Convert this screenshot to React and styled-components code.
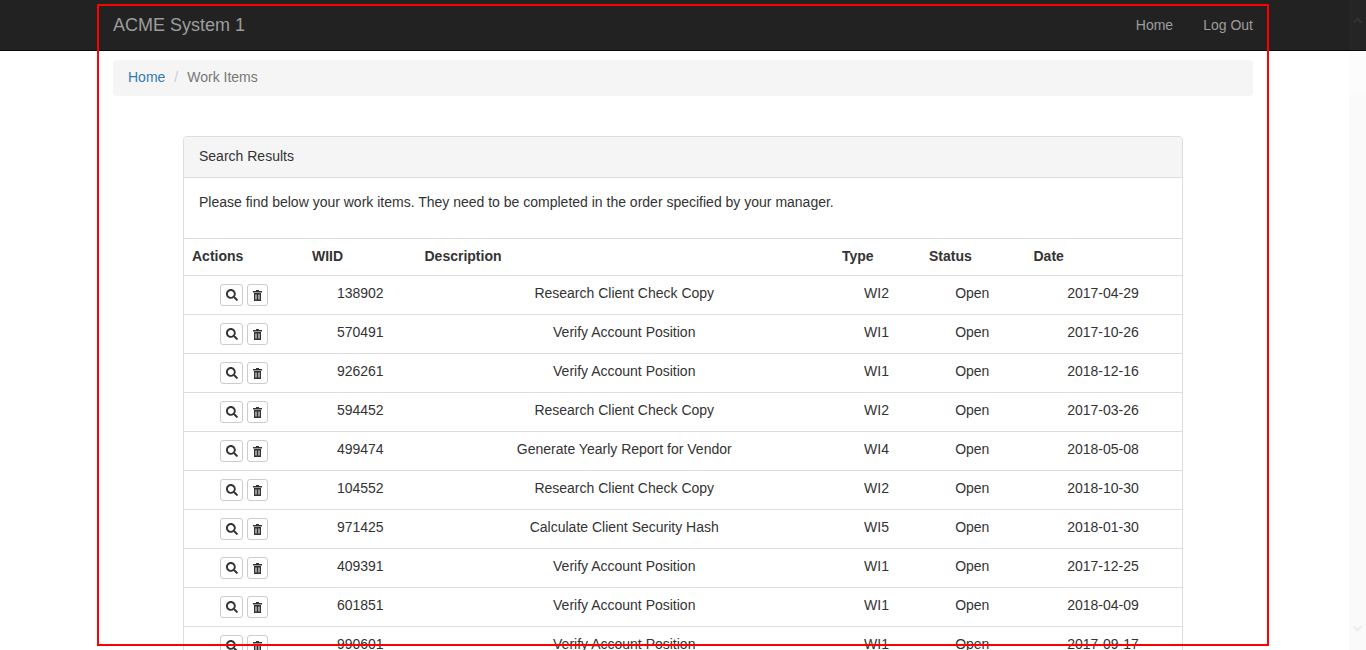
import React from 'react';
import styled, { createGlobalStyle } from 'styled-components';
import { FaSearch, FaChevronUp, FaChevronDown } from 'react-icons/fa';

const workItems = [
  { id: '138902', description: 'Research Client Check Copy', type: 'WI2', date: '2017-04-29' },
  { id: '570491', description: 'Verify Account Position', type: 'WI1', date: '2017-10-26' },
  { id: '926261', description: 'Verify Account Position', type: 'WI1', date: '2018-12-16' },
  { id: '594452', description: 'Research Client Check Copy', type: 'WI2', date: '2017-03-26' },
  { id: '499474', description: 'Generate Yearly Report for Vendor', type: 'WI4', date: '2018-05-08' },
  { id: '104552', description: 'Research Client Check Copy', type: 'WI2', date: '2018-10-30' },
  { id: '971425', description: 'Calculate Client Security Hash', type: 'WI5', date: '2018-01-30' },
  { id: '409391', description: 'Verify Account Position', type: 'WI1', date: '2017-12-25' },
  { id: '601851', description: 'Verify Account Position', type: 'WI1', date: '2018-04-09' },
  { id: '990601', description: 'Verify Account Position', type: 'WI1', date: '2017-09-17' },
];

const columns = [
  { label: 'Actions', width: 120 },
  { label: 'WIID', width: 112.5 },
  { label: 'Description', width: 417.5 },
  { label: 'Type', width: 87 },
  { label: 'Status', width: 104.5 },
  { label: 'Date', width: 157 },
];

const TrashIcon = () => (
  <svg width="9" height="11" viewBox="0 0 9 11" aria-hidden="true">
    <path
      fill="currentColor"
      fillRule="evenodd"
      d="M3 0h3v1h3v1.5H0V1h3zM1 3h7v8H1zM2.5 4.5v5h1v-5zm3 0v5h1v-5z"
    />
  </svg>
);

const App = () => (
  <Page>
    <GlobalStyle />
    <Navbar>
      <NavContainer>
        <Brand>ACME System 1</Brand>
        <NavLinks>
          <NavLink>Home</NavLink>
          <NavLink>Log Out</NavLink>
        </NavLinks>
      </NavContainer>
    </Navbar>
    <Container>
      <Breadcrumb>
        <CrumbLink>Home</CrumbLink>
        <CrumbDivider>/</CrumbDivider>
        <CrumbCurrent>Work Items</CrumbCurrent>
      </Breadcrumb>
      <Panel>
        <PanelHeading>Search Results</PanelHeading>
        <PanelBody>
          Please find below your work items. They need to be completed in the order specified by your manager.
        </PanelBody>
        <Table>
          <colgroup>
            {columns.map((column) => <col key={column.label} width={column.width} />)}
          </colgroup>
          <thead>
            <tr>
              {columns.map((column) => <HeadCell key={column.label}>{column.label}</HeadCell>)}
            </tr>
          </thead>
          <tbody>
            {workItems.map((item) => (
              <tr key={item.id}>
                <Cell>
                  <Actions>
                    <IconButton type="button" aria-label="View"><FaSearch size={12} /></IconButton>
                    <IconButton type="button" aria-label="Delete" $narrow><TrashIcon /></IconButton>
                  </Actions>
                </Cell>
                <Cell>{item.id}</Cell>
                <Cell>{item.description}</Cell>
                <Cell>{item.type}</Cell>
                <Cell>Open</Cell>
                <Cell>{item.date}</Cell>
              </tr>
            ))}
          </tbody>
        </Table>
      </Panel>
    </Container>
    <Scrollbar>
      <ScrollThumb>
        <FaChevronUp size={11} />
      </ScrollThumb>
      <ScrollTrack>
        <FaChevronDown size={11} />
      </ScrollTrack>
    </Scrollbar>
    <RedFrame />
  </Page>
);

const GlobalStyle = createGlobalStyle`
  html, body {
    margin: 0;
    height: 650px;
    overflow: hidden;
    background: #fff;
  }
  body {
    font-family: "Liberation Sans", Arial, sans-serif;
    font-size: 14px;
    line-height: 20px;
    color: #333;
  }
`;

const Page = styled.div`
  position: relative;
  width: 1366px;
  height: 650px;
  overflow: hidden;
`;

const Navbar = styled.nav`
  height: 50px;
  background-color: #222;
  border-bottom: 1px solid #080808;
`;

const NavContainer = styled.div`
  width: 1140px;
  height: 50px;
  margin: 0 auto;
  display: flex;
  align-items: center;
  justify-content: space-between;
`;

const Brand = styled.a`
  font-size: 18px;
  color: #9d9d9d;
`;

const NavLinks = styled.div`
  display: flex;
  gap: 30px;
`;

const NavLink = styled.a`
  color: #9d9d9d;
`;

const Container = styled.div`
  width: 1140px;
  margin: 0 auto;
  padding-top: 9px;
`;

const Breadcrumb = styled.ol`
  display: flex;
  margin: 0 0 40px;
  padding: 7px 15px 9px;
  background-color: #f5f5f5;
  border-radius: 4px;
  list-style: none;
`;

const CrumbLink = styled.li`
  color: #337ab7;
`;

const CrumbDivider = styled.li`
  padding: 0 9px;
  color: #ccc;
`;

const CrumbCurrent = styled.li`
  color: #777;
`;

const Panel = styled.section`
  width: 998px;
  margin: 0 auto;
  background: #fff;
  border: 1px solid #ddd;
  border-radius: 4px;
`;

const PanelHeading = styled.div`
  padding: 9px 15px 11px;
  background-color: #f5f5f5;
  border-bottom: 1px solid #ddd;
  border-radius: 3px 3px 0 0;
`;

const PanelBody = styled.p`
  margin: 0;
  padding: 14px 15px 26px;
`;

const Table = styled.table`
  width: 998px;
  table-layout: fixed;
  border-collapse: collapse;
`;

const HeadCell = styled.th`
  padding: 7px 8px 9px;
  text-align: left;
  font-weight: bold;
  border-top: 1px solid #ddd;
  border-bottom: 1px solid #ddd;
`;

const Cell = styled.td`
  padding: 7px 8px 9px;
  text-align: center;
  vertical-align: top;
  border-top: 1px solid #ddd;

  &:nth-child(n + 3) {
    padding-right: 10px;
  }
`;

const Actions = styled.div`
  display: flex;
  justify-content: center;
  gap: 4px;
  margin: 1px 0 -1px;
`;

const IconButton = styled.button`
  display: flex;
  align-items: center;
  justify-content: center;
  width: ${(props) => (props.$narrow ? 21 : 23)}px;
  height: 22px;
  padding: 0;
  background: #fff;
  color: #333;
  border: 1px solid #ccc;
  border-radius: 3px;
`;

const Scrollbar = styled.div`
  position: absolute;
  top: 0;
  right: 0;
  bottom: 0;
  width: 17px;
  display: flex;
  flex-direction: column;
`;

const ScrollThumb = styled.div`
  flex: 0 0 95px;
  display: flex;
  justify-content: center;
  padding-top: 15px;
  box-sizing: border-box;
  color: #333;
  background: rgba(150, 150, 150, 0.03);
`;

const ScrollTrack = styled.div`
  flex: 1;
  display: flex;
  justify-content: center;
  align-items: flex-end;
  padding-bottom: 16px;
  color: #ececec;
  background: rgba(0, 0, 0, 0.02);
`;

const RedFrame = styled.div`
  position: absolute;
  left: 97px;
  top: 4px;
  width: 1168px;
  height: 638px;
  border: 2px solid #f00;
  pointer-events: none;
`;

export default App;
